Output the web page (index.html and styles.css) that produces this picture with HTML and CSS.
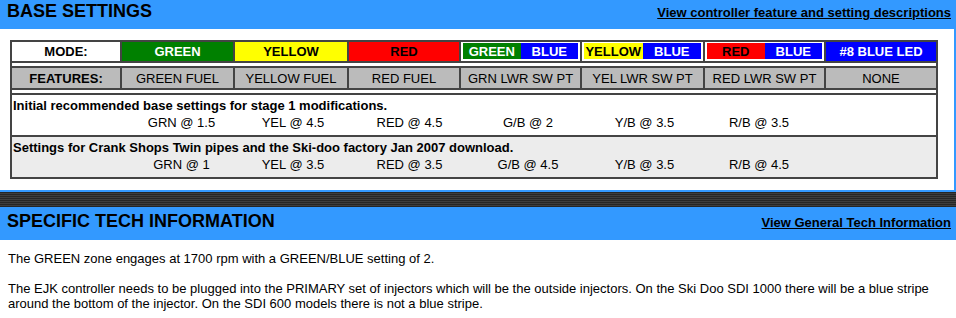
FILE: index.html
```html
<!DOCTYPE html>
<html>
<head>
<meta charset="utf-8">
<title>Base Settings</title>
<link rel="stylesheet" href="styles.css">
</head>
<body>
<div class="page">
  <div class="bar bar-top">
    <h2 class="bar-title">BASE SETTINGS</h2>
    <a class="bar-link" href="#">View controller feature and setting descriptions</a>
  </div>
  <div class="content">
    <div class="board">
      <div class="grid mode-row">
        <div class="cell label">MODE:</div>
        <div class="cell green">GREEN</div>
        <div class="cell yellow">YELLOW</div>
        <div class="cell red">RED</div>
        <div class="cell combo"><span class="half green">GREEN</span><span class="half blue">BLUE</span></div>
        <div class="cell combo"><span class="half yellow">YELLOW</span><span class="half blue">BLUE</span></div>
        <div class="cell combo"><span class="half red">RED</span><span class="half blue">BLUE</span></div>
        <div class="cell blue">#8 BLUE LED</div>
      </div>
      <div class="spacer"></div>
      <div class="grid feat-row">
        <div class="cell label">FEATURES:</div>
        <div class="cell">GREEN FUEL</div>
        <div class="cell">YELLOW FUEL</div>
        <div class="cell">RED FUEL</div>
        <div class="cell">GRN LWR SW PT</div>
        <div class="cell">YEL LWR SW PT</div>
        <div class="cell">RED LWR SW PT</div>
        <div class="cell">NONE</div>
      </div>
      <div class="spacer"></div>
      <div class="section">
        <div class="section-title">Initial recommended base settings for stage 1 modifications.</div>
        <div class="values">
          <span>GRN @ 1.5</span><span>YEL @ 4.5</span><span>RED @ 4.5</span><span>G/B @ 2</span><span>Y/B @ 3.5</span><span>R/B @ 3.5</span>
        </div>
      </div>
      <div class="section alt">
        <div class="section-title">Settings for Crank Shops Twin pipes and the Ski-doo factory Jan 2007 download.</div>
        <div class="values">
          <span>GRN @ 1</span><span>YEL @ 3.5</span><span>RED @ 3.5</span><span>G/B @ 4.5</span><span>Y/B @ 3.5</span><span>R/B @ 4.5</span>
        </div>
      </div>
    </div>
  </div>
  <div class="stripe"></div>
  <div class="bar bar-second">
    <h2 class="bar-title">SPECIFIC TECH INFORMATION</h2>
    <a class="bar-link" href="#">View General Tech Information</a>
  </div>
  <div class="text">
    <p>The GREEN zone engages at 1700 rpm with a GREEN/BLUE setting of 2.</p>
    <p>The EJK controller needs to be plugged into the PRIMARY set of injectors which will be the outside injectors. On the Ski Doo SDI 1000 there will be a blue stripe around the bottom of the injector. On the SDI 600 models there is not a blue stripe.</p>
  </div>
</div>
</body>
</html>
```

FILE: styles.css
```css
* { box-sizing: border-box; }

html, body {
  margin: 0;
  padding: 0;
  background: #ffffff;
}

body {
  font-family: "Liberation Sans", Arial, sans-serif;
  font-size: 13px;
  color: #000;
}

.page {
  width: 956px;
}

.bar {
  background: #3399ff;
  display: flex;
  justify-content: space-between;
  align-items: baseline;
  padding: 0 5px 0 7px;
}

.bar-top {
  height: 29px;
}

.bar-second {
  height: 33px;
}

.bar-title {
  margin: 0;
  font-size: 18px;
  font-weight: bold;
}

.bar-top .bar-title {
  line-height: 23px;
}

.bar-second .bar-title {
  line-height: 29px;
}

.bar-link {
  color: #000;
  font-size: 13px;
  font-weight: bold;
  text-decoration: underline;
}

.content {
  border-right: 2px solid #3399ff;
  border-bottom: 2px solid #3399ff;
  padding: 11px 0 11px 10px;
}

.board {
  width: 928px;
  border: 2px solid #444;
  background: #fff;
}

.grid {
  display: grid;
  grid-template-columns: 108px 111px 112px 110px 119px 121px 119px 110px;
  column-gap: 2px;
  background: #444;
}

.mode-row {
  height: 19px;
}

.feat-row {
  height: 20px;
}

.cell {
  display: flex;
  align-items: center;
  justify-content: center;
  white-space: nowrap;
  font-size: 13px;
}

.mode-row .cell {
  font-weight: bold;
  background: #fff;
}

.feat-row .cell {
  background: #bbbbbb;
}

.cell.label {
  font-weight: bold;
}

.mode-row .cell.green,
.half.green {
  background: #008000;
  color: #fff;
}

.mode-row .cell.yellow,
.half.yellow {
  background: #ffff00;
  color: #000;
}

.mode-row .cell.red,
.half.red {
  background: #ff0000;
  color: #000;
}

.mode-row .cell.blue,
.half.blue {
  background: #0000ff;
  color: #fff;
}

.mode-row .cell.combo {
  background: #fff;
  padding: 1px 2px 2px;
  align-items: stretch;
}

.half {
  flex: 1 1 0;
  display: flex;
  align-items: center;
  justify-content: center;
  font-weight: bold;
}

.spacer {
  height: 7px;
  border-top: 2px solid #444;
  border-bottom: 2px solid #444;
  background: #fff;
}

.section {
  height: 40px;
  padding: 2px 0 4px 1px;
  line-height: 17px;
  background: #fff;
}

.section.alt {
  height: 42px;
  border-top: 2px solid #444;
  background: #ececec;
}

.section-title {
  font-weight: bold;
  white-space: nowrap;
}

.values {
  display: grid;
  grid-template-columns: 109px 114px 119px 118px 115px 114px;
  padding-left: 114px;
  text-align: center;
  white-space: nowrap;
}

.stripe {
  height: 15px;
  background: repeating-linear-gradient(to bottom, #262626 0, #262626 1px, #3e3e3e 1px, #3e3e3e 2px);
}

.text {
  padding: 11px 8px 0 8px;
  line-height: 15px;
}

.text p {
  margin: 0 0 15px;
}
```
